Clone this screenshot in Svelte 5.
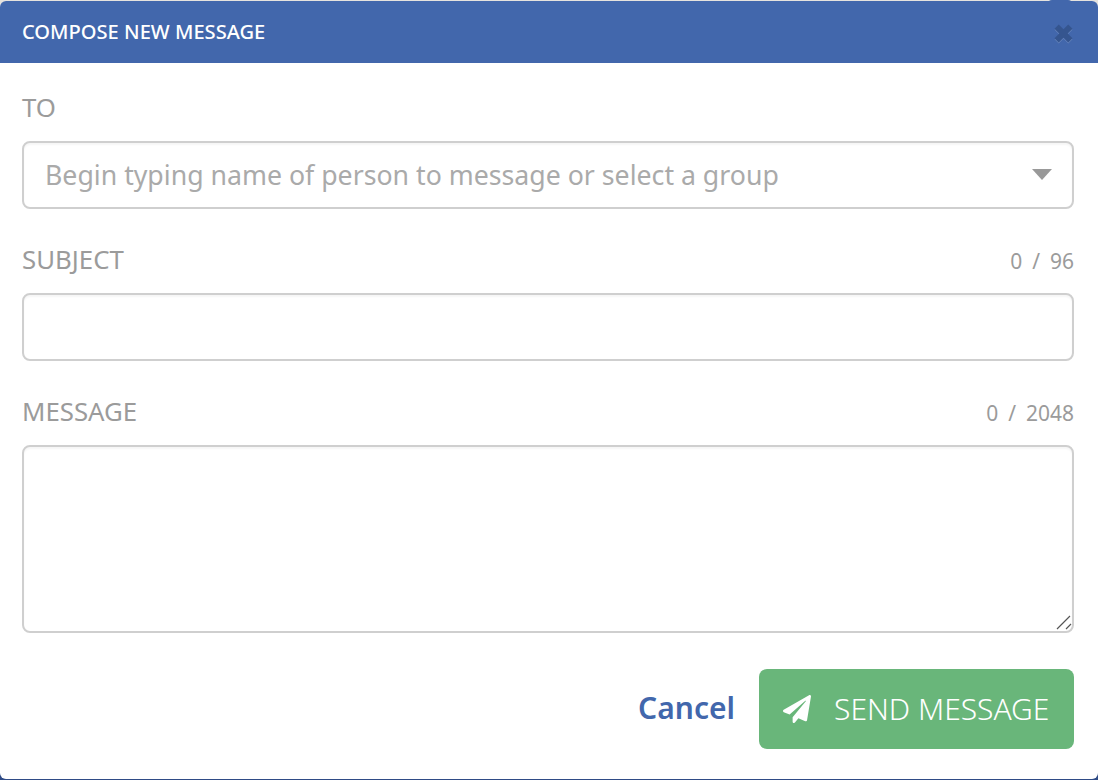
<script>
  let to = $state("");
  let subject = $state("");
  let message = $state("");
</script>

<div class="modal">
  <header class="head">
    <h1>COMPOSE NEW MESSAGE</h1>
    <button class="close" aria-label="Close">
      <svg viewBox="3 3 18 18" width="19" height="19"><path d="M3.500 7.500 7.500 3.500 12 8l4.500-4.500 4 4L16 12l4.500 4.500-4 4L12 16l-4.500 4.500-4-4L8 12z" /></svg>
    </button>
  </header>

  <form class="body">
    <div class="label-row"><label for="to">TO</label></div>
    <div class="select">
      <input id="to" bind:value={to} placeholder="Begin typing name of person to message or select a group" />
      <span class="caret"></span>
    </div>

    <div class="label-row spaced">
      <label for="subject">SUBJECT</label>
      <span class="count">{subject.length} / 96</span>
    </div>
    <input id="subject" bind:value={subject} />

    <div class="label-row spaced">
      <label for="message">MESSAGE</label>
      <span class="count">{message.length} / 2048</span>
    </div>
    <div class="area">
      <textarea id="message" bind:value={message}></textarea>
      <svg class="grip" viewBox="0 0 16 16" width="16" height="16"><path d="M1 14 14 1M10 14l5-5" /></svg>
    </div>

    <div class="actions">
      <a class="cancel" href="#cancel">Cancel</a>
      <button type="button" class="send">
        <svg viewBox="0 0 512 512" width="28" height="28"><path d="M476 3.200 12.500 270.600c-18.100 10.400-15.800 35.600 2.200 43.200L121 358.400l287.300-253.200c5.500-4.900 13.300 2.600 8.600 8.300L176 407v80.500c0 23.600 28.500 32.900 42.500 15.800L282 426l124.600 52.200c14.200 6 30.400-2.900 33-18.200l72-432C515 7.800 493.300-6.800 476 3.200z" /></svg>
        <span>SEND MESSAGE</span>
      </button>
    </div>
  </form>
</div>

<style>
  :global(body) {
    min-height: 100vh;
    background: linear-gradient(#e6e3de 50%, #2f4b86 50%);
  }

  .modal {
    position: relative;
    top: 1px;
    height: 778px;
    width: 1098px;
    background: #fff;
    border-radius: 6px;
    font-family: "Noto Sans", sans-serif;
    box-sizing: border-box;
  }

  .head {
    position: relative;
    height: 62px;
    background: #4267ac;
    border-radius: 6px 6px 0 0;
    display: flex;
    align-items: center;
    padding: 0 22px 2px;
    box-sizing: border-box;
  }

  h1 {
    margin: 0;
    color: #fff;
    font-size: 20.1px;
    font-weight: 500;
  }

  .close {
    position: absolute;
    top: -1px;
    right: 26px;
    width: 24px;
    height: 20px;
    background: #4267ac;
    border: none;
    border-radius: 4px 4px 0 0;
    padding: 0;
    overflow: visible;
  }

  .close svg {
    position: absolute;
    top: 24px;
    left: 6px;
    filter: drop-shadow(0 1px 0 rgba(255, 255, 255, 0.18));
  }

  .close path {
    fill: #35558f;
  }

  .body {
    padding: 0 24px 0 22px;
    display: flex;
    flex-direction: column;
  }

  .label-row {
    display: flex;
    justify-content: space-between;
    align-items: flex-end;
    height: 78px;
    padding-bottom: 17px;
    box-sizing: border-box;
  }

  .label-row.spaced {
    height: 84px;
  }

  label {
    color: #9b9b9b;
    font-size: 25.800px;
    line-height: 34px;
  }

  .count {
    color: #9b9b9b;
    font-size: 21px;
    line-height: 34px;
    word-spacing: 4.500px;
    margin-bottom: -2px;
  }

  input,
  textarea {
    display: block;
    width: 100%;
    box-sizing: border-box;
    height: 68px;
    border: 2px solid #cfcfcf;
    border-radius: 8px;
    padding: 0 21px 2px;
    outline: none;
    font-family: inherit;
    font-size: 26.700px;
    color: #444;
    box-shadow: inset 0 2px 2px rgba(0, 0, 0, 0.04);
  }

  input::placeholder {
    color: #aaa;
  }

  textarea {
    height: 188px;
    resize: none;
  }

  .select,
  .area {
    position: relative;
  }

  .caret {
    position: absolute;
    right: 22px;
    top: 28px;
    border-left: 10px solid transparent;
    border-right: 10px solid transparent;
    border-top: 11px solid #999;
  }

  .grip {
    position: absolute;
    right: 2px;
    bottom: 2px;
  }

  .grip path {
    fill: none;
    stroke: #555;
    stroke-width: 1.200;
  }

  .actions {
    display: flex;
    justify-content: flex-end;
    align-items: center;
    gap: 24px;
    margin-top: 36px;
  }

  .cancel {
    color: #4267ac;
    font-size: 30px;
    font-weight: 600;
    text-decoration: none;
    padding-bottom: 3px;
  }

  .send {
    height: 80px;
    width: 315px;
    background: #69b67a;
    color: #fff;
    border: none;
    border-radius: 8px;
    font-family: inherit;
    font-size: 30px;
    font-weight: 300;
    display: flex;
    align-items: center;
    justify-content: flex-start;
    padding: 0 0 0 24px;
    gap: 23px;
  }

  .send span {
    margin-bottom: 2px;
  }

  .send path {
    fill: #fff;
  }
</style>
